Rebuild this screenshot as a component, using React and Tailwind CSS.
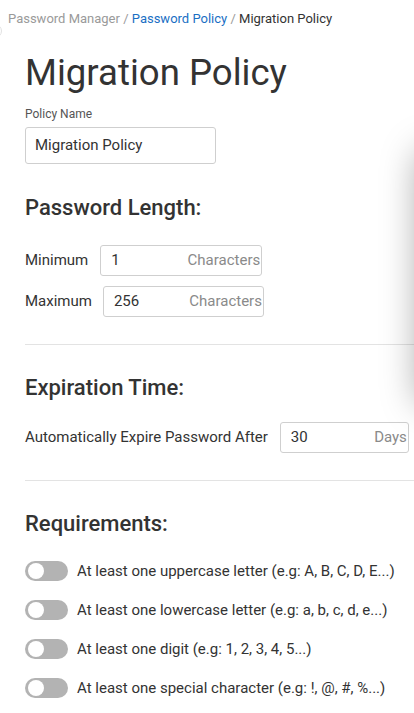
import { useState } from "react";

const requirements = [
  "At least one uppercase letter (e.g: A, B, C, D, E...)",
  "At least one lowercase letter (e.g: a, b, c, d, e...)",
  "At least one digit (e.g: 1, 2, 3, 4, 5...)",
  "At least one special character (e.g: !, @, #, %...)",
];

function Toggle({ on, onClick }) {
  return (
    <button
      onClick={onClick}
      className={`relative w-[43px] h-[20px] rounded-full shrink-0 ${on ? "bg-[#1a73c8]" : "bg-[#b3b3b3]"}`}
    >
      <span
        className={`absolute top-[2px] w-[16px] h-[16px] rounded-full bg-white ${on ? "left-[25px]" : "left-[3px]"}`}
      />
    </button>
  );
}

function SuffixInput({ value, suffix, className }) {
  return (
    <div className={`flex items-center h-[31px] border border-[#cfcfcf] rounded-[3px] pl-[10px] pr-[1px] ${className}`}>
      <input
        defaultValue={value}
        className="flex-1 min-w-0 outline-none text-[15px] text-[#333]"
      />
      <span className="text-[15px] text-[#8a8a8a]">{suffix}</span>
    </div>
  );
}

export default function App() {
  const [toggles, setToggles] = useState([false, false, false, false]);

  const flip = (i) => {
    setToggles(toggles.map((t, j) => (j === i ? !t : t)));
  };

  return (
    <div className="relative min-h-screen overflow-hidden bg-white font-['Roboto',sans-serif] text-[#333]">
      {/* partially hidden round button at the left edge */}
      <div className="absolute left-[-12px] top-[24px] w-[14px] h-[14px] rounded-full border border-[#e2e2e2]" />

      {/* drawer shadow off to the right */}
      <div className="absolute left-[418px] top-[150px] w-[300px] h-[255px] rounded-xl bg-white shadow-[0_0_36px_rgba(0,0,0,0.35)]" />

      <div className="px-[8px] pt-[9px] text-[13px]">
        <span className="text-[#9a9a9a]">Password Manager</span>
        <span className="text-[#9a9a9a]"> / </span>
        <span className="text-[#1a6fc4]">Password Policy</span>
        <span className="text-[#9a9a9a]"> / </span>
        <span className="text-[#333]">Migration Policy</span>
      </div>

      <div className="pl-[25px]">
        <h1 className="text-[36.6px] text-[#333] mt-[23px] leading-[42px]">Migration Policy</h1>

        <div className="mt-[11px] text-[12px] text-[#555]">Policy Name</div>
        <input
          defaultValue="Migration Policy"
          className="mt-[4px] w-[191px] h-[37px] border border-[#cfcfcf] rounded-[3px] px-[9px] text-[15px] text-[#333] outline-none"
        />

        <h2 className="mt-[27px] text-[22px] font-medium text-[#333]">Password Length:</h2>

        <div className="mt-[21px] flex items-center gap-[12px]">
          <span className="text-[15px]">Minimum</span>
          <SuffixInput value="1" suffix="Characters" className="w-[162px]" />
        </div>
        <div className="mt-[10px] flex items-center gap-[11px]">
          <span className="text-[15px]">Maximum</span>
          <SuffixInput value="256" suffix="Characters" className="w-[161px]" />
        </div>

        <div className="mt-[27px] border-t border-[#e3e3e3]" />

        <h2 className="mt-[26px] text-[22px] font-medium text-[#333]">Expiration Time:</h2>

        <div className="mt-[18px] flex items-center gap-[12px]">
          <span className="text-[15px]">Automatically Expire Password After</span>
          <SuffixInput value="30" suffix="Days" className="w-[129px]" />
        </div>

        <div className="mt-[27px] border-t border-[#e3e3e3]" />

        <h2 className="mt-[26px] text-[22px] font-medium text-[#333]">Requirements:</h2>

        <div className="mt-[20px] flex flex-col gap-[16.5px]">
          {requirements.map((r, i) => (
            <div key={r} className="flex items-center gap-[9px]">
              <Toggle on={toggles[i]} onClick={() => flip(i)} />
              <span className="text-[15px]">{r}</span>
            </div>
          ))}
        </div>
      </div>
    </div>
  );
}
